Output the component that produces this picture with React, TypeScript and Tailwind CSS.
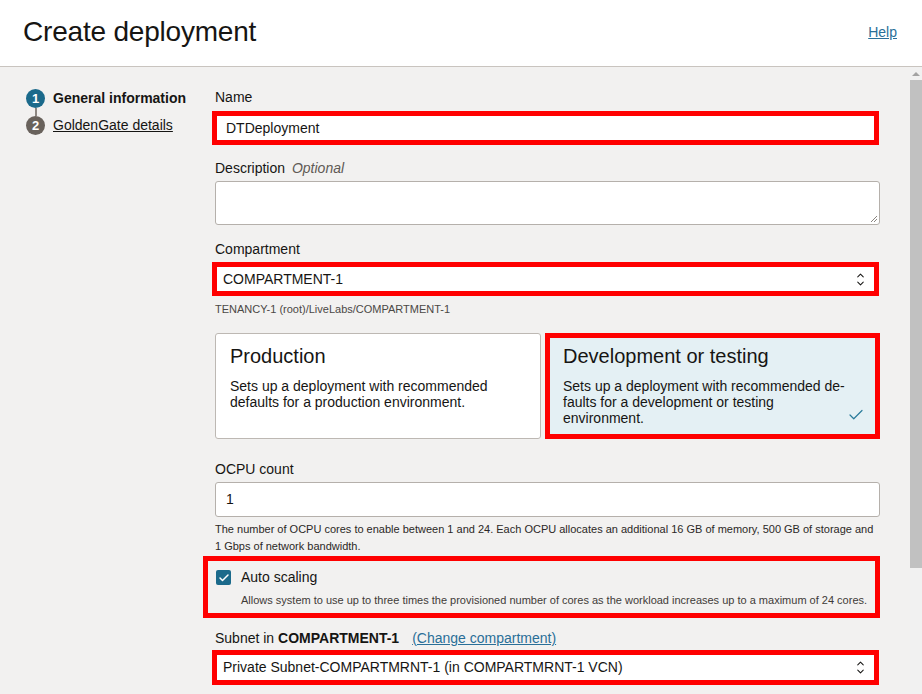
import { Check, ChevronUp, ChevronDown } from 'lucide-react';

const RED = 'border-[5px] border-[#ff0000]';

const SelectArrows = () => (
    <span className='flex flex-col items-center text-[#161513] -space-y-[3px]'>
        <ChevronUp size={11} strokeWidth={2.2} />
        <ChevronDown size={11} strokeWidth={2.2} />
    </span>
);

const Step = ({ n, label, active }: { n: number; label: string; active?: boolean }) => (
    <div className='flex items-center gap-[8px] h-[19px]'>
        <span
            className={`w-[19px] h-[19px] rounded-full flex items-center justify-center text-white text-[13px] font-bold ${active ? 'bg-[#1b6a8b]' : 'bg-[#69625c]'}`}
        >
            {n}
        </span>
        {active ? (
            <span className='text-[14px] font-bold text-[#161513]'>{label}</span>
        ) : (
            <a className='text-[14px] underline text-[#161513]'>{label}</a>
        )}
    </div>
);

const App = () => {
    return (
        <div className="w-[922px] h-[694px] flex flex-col bg-[#f2f1f0] overflow-hidden font-['Liberation_Sans',Arial,sans-serif] text-[#161513]">
            {/* Header */}
            <header className='h-[67px] shrink-0 bg-white border-b border-[#c9c4bf] flex items-center justify-between pl-[23px] pr-[25px] pb-[2px]'>
                <h1 className='text-[28px] leading-none tracking-[-0.2px]'>Create deployment</h1>
                <a className='text-[14px] underline text-[#2a6f98]'>Help</a>
            </header>

            <div className='flex flex-1 min-h-0'>
                <div className='flex flex-1 min-w-0'>
                    {/* Steps */}
                    <nav className='w-[215px] shrink-0 pl-[26px] pt-[22px]'>
                        <Step n={1} label='General information' active />
                        <div className='w-[2px] h-[8px] bg-[#8d8782] ml-[8.5px]' />
                        <Step n={2} label='GoldenGate details' />
                    </nav>

                    {/* Form */}
                    <main className='w-[665px] pt-[22px] text-[14px]'>
                        <label className='block leading-[16px]'>Name</label>
                        <div className={`${RED} -ml-[3px] w-[667px] h-[34px] mt-[6px] bg-white flex items-center pl-[9px]`}>
                            DTDeployment
                        </div>

                        <label className='block leading-[16px] mt-[15px]'>
                            Description <span className='italic text-[#5f5a55] ml-[3px]'>Optional</span>
                        </label>
                        <div className='relative mt-[5px] h-[44px] bg-white border border-[#b5b0ab] rounded-[3px]'>
                            <svg className='absolute right-[1px] bottom-[1px]' width='9' height='9' viewBox='0 0 9 9'>
                                <path d='M8 2 L2 8 M8 5 L5 8' stroke='#8a8580' strokeWidth='1' />
                            </svg>
                        </div>

                        <label className='block leading-[16px] mt-[16px]'>Compartment</label>
                        <div className={`${RED} -ml-[3px] w-[667px] h-[34px] mt-[5px] bg-white flex items-center justify-between pl-[6px] pr-[8px]`}>
                            <span>COMPARTMENT-1</span>
                            <SelectArrows />
                        </div>
                        <div className='text-[11px] leading-[14px] text-[#4b4845] mt-[6px]'>
                            TENANCY-1 (root)/LiveLabs/COMPARTMENT-1
                        </div>

                        {/* Deployment type cards */}
                        <div className='flex gap-[4px] mt-[17px] h-[106px]'>
                            <div className='w-[326px] bg-white border border-[#bdb8b3] rounded-[3px] pl-[14px] pr-[12px] pt-[10px]'>
                                <div className='text-[20px] leading-[24px]'>Production</div>
                                <p className='mt-[10px] leading-[16px]'>
                                    Sets up a deployment with recommended
                                    <br />
                                    defaults for a production environment.
                                </p>
                            </div>
                            <div className={`${RED} flex-1 bg-[#e4f0f4] pl-[13px] pr-[12px] pt-[6px] relative`}>
                                <div className='text-[20px] leading-[24px]'>Development or testing</div>
                                <p className='mt-[10px] leading-[16px]'>
                                    Sets up a deployment with recommended de-
                                    <br />
                                    faults for a development or testing
                                    <br />
                                    environment.
                                </p>
                                <Check className='absolute right-[10px] bottom-[10px] text-[#2a7b9b]' size={18} strokeWidth={1.6} />
                            </div>
                        </div>

                        <label className='block leading-[16px] mt-[22px]'>OCPU count</label>
                        <div className='mt-[5px] h-[35px] bg-white border border-[#b5b0ab] rounded-[3px] flex items-center pl-[10px]'>
                            1
                        </div>
                        <p className='text-[11px] leading-[17px] mt-[4px] text-[#2b2826]'>
                            The number of OCPU cores to enable between 1 and 24. Each OCPU allocates an additional 16 GB of memory, 500 GB of storage and
                            <br />
                            1 Gbps of network bandwidth.
                        </p>

                        <div className={`${RED} -ml-[12px] w-[677px] h-[62px] mt-[1px] pl-[8px] pt-[8px]`}>
                            <div className='flex items-center gap-[10px] h-[17px]'>
                                <span className='w-[15px] h-[15px] rounded-[2px] bg-[#1b6a8b] flex items-center justify-center'>
                                    <Check className='text-white' size={12} strokeWidth={3} />
                                </span>
                                <span className='text-[14px]'>Auto scaling</span>
                            </div>
                            <p className='text-[11px] leading-[14px] mt-[7px] pl-[25px] text-[#3f3b38]'>
                                Allows system to use up to three times the provisioned number of cores as the workload increases up to a maximum of 24 cores.
                            </p>
                        </div>

                        <div className='flex items-center gap-[13px] mt-[12px] leading-[16px]'>
                            <span>
                                Subnet in <span className='font-bold'>COMPARTMENT-1</span>
                            </span>
                            <a className='underline text-[#2a6f98]'>(Change compartment)</a>
                        </div>
                        <div className={`${RED} -ml-[3px] w-[667px] h-[35px] mt-[4px] bg-white flex items-center justify-between pl-[6px] pr-[8px]`}>
                            <span>Private Subnet-COMPARTMRNT-1 (in COMPARTMRNT-1 VCN)</span>
                            <SelectArrows />
                        </div>
                    </main>
                </div>

                {/* Scrollbar */}
                <div className='w-[12px] shrink-0 bg-[#f1f1f1] flex flex-col items-center'>
                    <div className='h-[13px] flex items-center justify-center'>
                        <div className='w-0 h-0 border-l-[4px] border-r-[4px] border-b-[4px] border-l-transparent border-r-transparent border-b-[#a3a3a3]' />
                    </div>
                    <div className='w-[12px] h-[488px] bg-[#c1c1c1]' />
                </div>
            </div>
        </div>
    );
};

export default App;
